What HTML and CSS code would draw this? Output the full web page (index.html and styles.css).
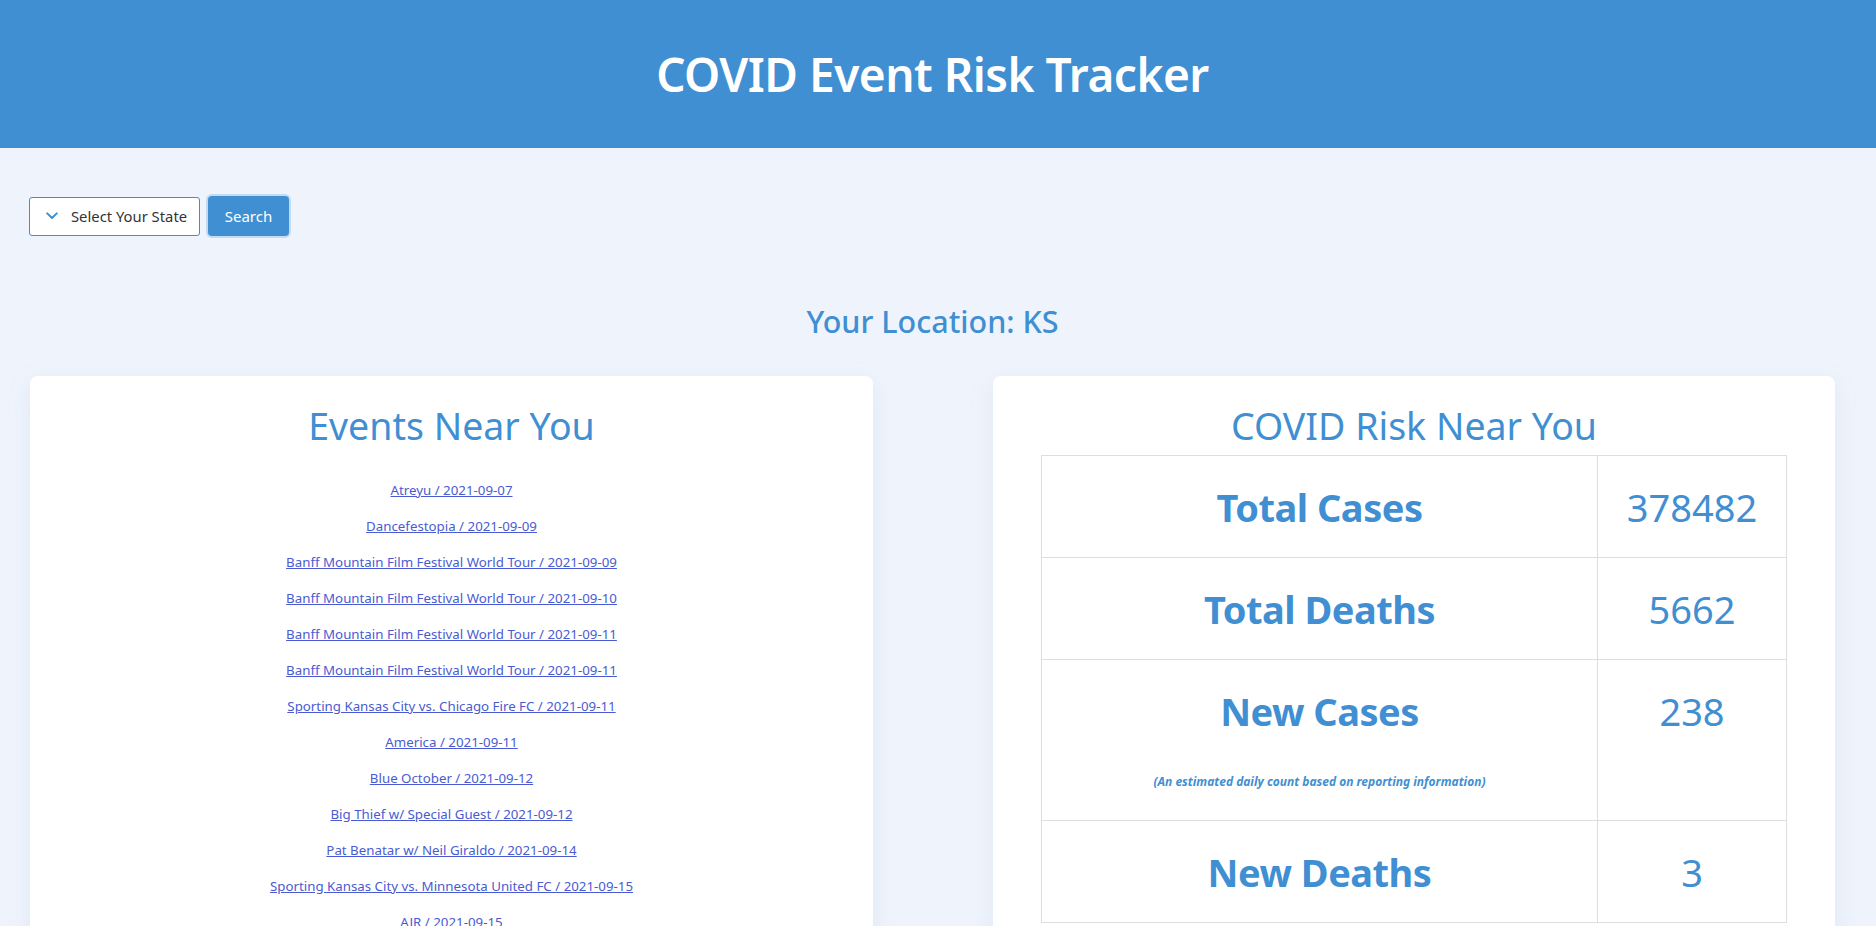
FILE: index.html
```html
<!DOCTYPE html>
<html lang="en">
<head>
<meta charset="utf-8">
<title>COVID Event Risk Tracker</title>
<link rel="stylesheet" href="styles.css">
</head>
<body>
<header class="topbar">
  <h1 class="topbar-title">COVID Event Risk Tracker</h1>
</header>
<main class="page">
  <div class="controls">
    <div class="state-select">
      <svg class="chevron" viewBox="0 0 12 8" width="12" height="8"><path d="M1.2 1.4 L6 6 L10.8 1.4" fill="none" stroke="#3f8fd2" stroke-width="2" stroke-linecap="round" stroke-linejoin="round"/></svg>
      <span class="state-label">Select Your State</span>
    </div>
    <button class="search-btn" type="button">Search</button>
  </div>

  <h2 class="location">Your Location: KS</h2>

  <div class="cards">
    <section class="card">
      <h2 class="card-title">Events Near You</h2>
      <ul class="events">
        <li><a href="#">Atreyu / 2021-09-07</a></li>
        <li><a href="#">Dancefestopia / 2021-09-09</a></li>
        <li><a href="#">Banff Mountain Film Festival World Tour / 2021-09-09</a></li>
        <li><a href="#">Banff Mountain Film Festival World Tour / 2021-09-10</a></li>
        <li><a href="#">Banff Mountain Film Festival World Tour / 2021-09-11</a></li>
        <li><a href="#">Banff Mountain Film Festival World Tour / 2021-09-11</a></li>
        <li><a href="#">Sporting Kansas City vs. Chicago Fire FC / 2021-09-11</a></li>
        <li><a href="#">America / 2021-09-11</a></li>
        <li><a href="#">Blue October / 2021-09-12</a></li>
        <li><a href="#">Big Thief w/ Special Guest / 2021-09-12</a></li>
        <li><a href="#">Pat Benatar w/ Neil Giraldo / 2021-09-14</a></li>
        <li><a href="#">Sporting Kansas City vs. Minnesota United FC / 2021-09-15</a></li>
        <li><a href="#">AJR / 2021-09-15</a></li>
      </ul>
    </section>

    <section class="card">
      <h2 class="card-title">COVID Risk Near You</h2>
      <table class="risk">
        <tr>
          <td class="label-cell"><div class="label">Total Cases</div></td>
          <td class="value-cell"><div class="value">378482</div></td>
        </tr>
        <tr>
          <td class="label-cell"><div class="label">Total Deaths</div></td>
          <td class="value-cell"><div class="value">5662</div></td>
        </tr>
        <tr>
          <td class="label-cell"><div class="label">New Cases</div><p class="note">(An estimated daily count based on reporting information)</p></td>
          <td class="value-cell"><div class="value">238</div></td>
        </tr>
        <tr>
          <td class="label-cell"><div class="label">New Deaths</div></td>
          <td class="value-cell"><div class="value">3</div></td>
        </tr>
      </table>
    </section>
  </div>
</main>
</body>
</html>
```

FILE: styles.css
```css
* { box-sizing: border-box; }

html, body {
  margin: 0;
  padding: 0;
}

body {
  background: #eff4fc;
  font-family: "Noto Sans", "Open Sans", sans-serif;
  color: #3f8fd2;
}

.topbar {
  background: #3f8fd2;
  height: 148px;
  display: flex;
  align-items: center;
  justify-content: center;
  padding-right: 11px;
}

.topbar-title {
  margin: 0;
  color: #ffffff;
  font-size: 46px;
  font-weight: 600;
  letter-spacing: -0.5px;
  line-height: 1;
}

.page {
  padding: 48px 41px 0 29px;
}

.controls {
  display: flex;
  align-items: center;
  gap: 8px;
}

.state-select {
  width: 171px;
  height: 39px;
  background: #ffffff;
  border: 1px solid #3f8fd2;
  border-radius: 3px;
  display: flex;
  align-items: center;
  padding-left: 16px;
  gap: 13px;
}

.chevron { flex: none; }

.state-label {
  font-size: 14.8px;
  color: #333333;
  white-space: nowrap;
}

.search-btn {
  width: 81px;
  height: 40px;
  background: #3f8fd2;
  color: #ffffff;
  border: none;
  border-radius: 4px;
  box-shadow: 0 0 0 2px #c3dbf2;
  font-family: inherit;
  font-size: 15px;
  padding: 0;
}

.location {
  margin: 65px 0 0 0;
  padding-left: 1px;
  text-align: center;
  font-size: 30.5px;
  font-weight: 500;
  line-height: 40px;
  color: #3f8fd2;
}

.cards {
  margin-top: 35px;
  display: grid;
  grid-template-columns: 843px 842px;
  column-gap: 120px;
  padding-left: 1px;
}

.card {
  background: #ffffff;
  border-radius: 8px;
  box-shadow: 0 6px 28px rgba(60, 100, 170, 0.08);
  padding: 26px 48px 40px;
  min-height: 700px;
}

.card-title {
  margin: 0 0 5px;
  text-align: center;
  font-size: 37.5px;
  font-weight: 400;
  line-height: 48px;
  color: #3f8fd2;
}

.events {
  list-style: none;
  margin: 0;
  padding: 25px 0 0;
  text-align: center;
}

.events li {
  font-size: 13.3px;
  line-height: 20px;
  margin-bottom: 16px;
}

.events a {
  color: #4a5bd2;
  text-decoration: underline;
}

.risk {
  width: 100%;
  border-collapse: collapse;
}

.risk td {
  border: 1px solid #dcdee2;
  vertical-align: top;
  text-align: center;
  padding: 27px 10px 26px;
}

.label-cell { width: 556px; }

.label {
  font-size: 38px;
  font-weight: 700;
  line-height: 48px;
  letter-spacing: -0.5px;
}

.value {
  font-size: 38px;
  font-weight: 400;
  line-height: 48px;
}

.note {
  margin: 39px 0 4px;
  font-size: 12px;
  font-style: italic;
  font-weight: 700;
  line-height: 16px;
}
```
